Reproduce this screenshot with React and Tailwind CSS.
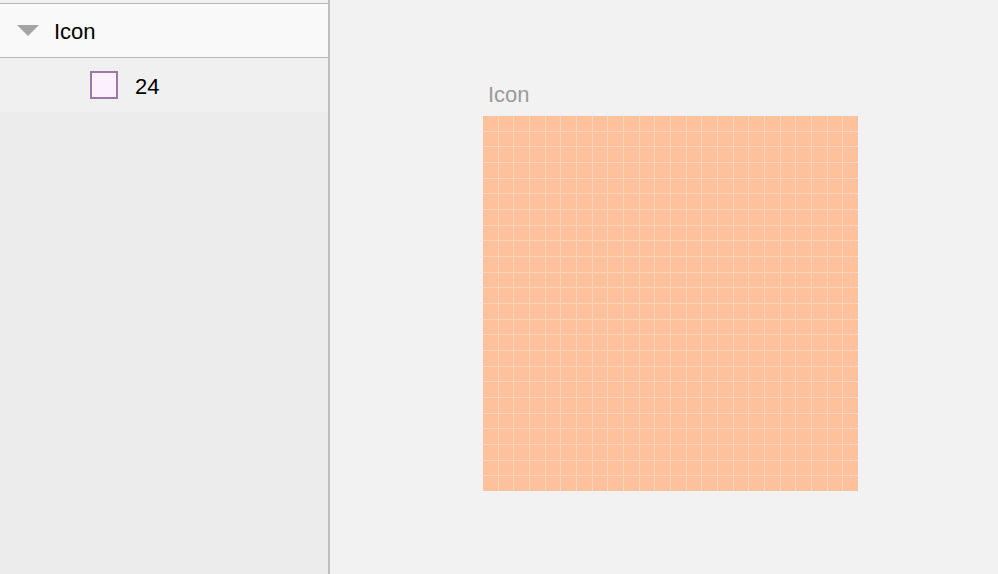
const cells = Array.from({ length: 576 });

export default function App() {
  return (
    <div className="flex h-[574px] w-[998px] overflow-hidden bg-[#f2f2f2] font-['Helvetica','Liberation_Sans',sans-serif]">
      {/* sidebar */}
      <div className="flex w-[330px] shrink-0 flex-col border-r-2 border-[#bfbfbf] bg-[#ececec]">
        <div className="h-[3px] bg-[#f0f0f0]" />
        <div className="flex h-[55px] items-center border-y border-[#b8b8b8] bg-[#f9f9f9]">
          <svg width="22" height="11" viewBox="0 0 22 11" className="ml-[17px]">
            <polygon points="0,0 22,0 11,11" fill="#a3a3a3" />
          </svg>
          <span className="ml-[15px] mt-[3px] text-[22px] leading-none text-black">Icon</span>
        </div>
        <div className="flex h-[54px] items-center bg-[#f0f0f0] pl-[90px]">
          <div className="h-[28px] w-[28px] border-2 border-[#9b79a6] bg-[#fdf0fd]" />
          <span className="ml-[17px] mt-[3px] text-[22px] leading-none text-black">24</span>
        </div>
      </div>

      {/* canvas */}
      <div className="flex flex-1 flex-col pl-[153px] pt-[81px]">
        <div className="ml-[5px] text-[22px] leading-[28px] text-[#9a9a9a]">Icon</div>
        <div className="mt-[7px] grid h-[375px] w-[375px] grid-cols-24 gap-px bg-[#ffd3b8]">
          {cells.map((_, i) => (
            <div key={i} className="bg-[#ffc19b]" />
          ))}
        </div>
      </div>
    </div>
  );
}
